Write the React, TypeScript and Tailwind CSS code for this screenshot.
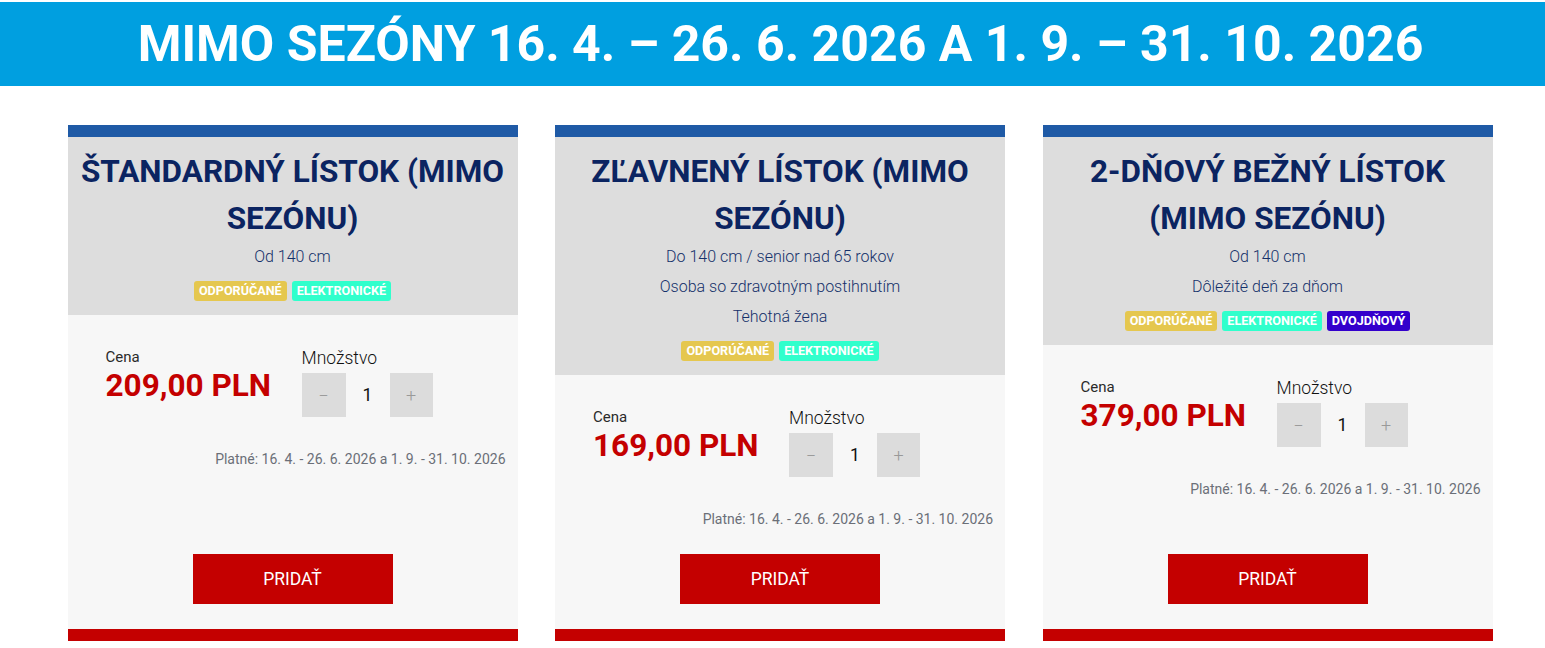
import React from "react";

type Badge = { label: string; cls: string };

const ODP: Badge = { label: "ODPORÚČANÉ", cls: "bg-[#e5c74f]" };
const ELE: Badge = { label: "ELEKTRONICKÉ", cls: "bg-[#30ffcc]" };
const DVO: Badge = { label: "DVOJDŇOVÝ", cls: "bg-[#3300cc]" };

const cards = [
  {
    title: "ŠTANDARDNÝ LÍSTOK (MIMO SEZÓNU)",
    lines: ["Od 140 cm"],
    badges: [ODP, ELE],
    price: "209,00 PLN",
  },
  {
    title: "ZĽAVNENÝ LÍSTOK (MIMO SEZÓNU)",
    lines: ["Do 140 cm / senior nad 65 rokov", "Osoba so zdravotným postihnutím", "Tehotná žena"],
    badges: [ODP, ELE],
    price: "169,00 PLN",
  },
  {
    title: "2-DŇOVÝ BEŽNÝ LÍSTOK (MIMO SEZÓNU)",
    lines: ["Od 140 cm", "Dôležité deň za dňom"],
    badges: [ODP, ELE, DVO],
    price: "379,00 PLN",
  },
];

function Card({ c }: { c: (typeof cards)[number] }) {
  return (
    <div className="flex flex-col w-[450px]">
      <div className="h-[12px] bg-[#1f5aa6]" />
      <div className="bg-[#dddddd] px-3 pt-[11px] pb-[14px] text-center">
        <h2 className="text-[31.5px] leading-[47px] font-bold text-[#0b2461]">{c.title}</h2>
        {c.lines.map((l) => (
          <p key={l} className="text-[16px] leading-[30px] font-light text-[#14306a]">
            {l}
          </p>
        ))}
        <div className="mt-[9px] flex justify-center gap-[5px]">
          {c.badges.map((b) => (
            <span
              key={b.label}
              className={`${b.cls} h-[20px] px-[5px] rounded-[3px] text-white text-[12.6px] leading-[20px] font-bold`}
            >
              {b.label}
            </span>
          ))}
        </div>
      </div>
      <div className="flex-1 bg-[#f7f7f7] flex flex-col px-3 pt-[31px] pb-[25px]">
        <div className="flex pl-[26px]">
          <div className="w-[196px]">
            <div className="text-[15px] leading-[20px] font-normal text-[#2a2a2a] mt-[1px]">Cena</div>
            <div className="text-[31.5px] leading-[38px] font-bold text-[#c40000]">{c.price}</div>
          </div>
          <div>
            <div className="text-[17.5px] leading-[24px] font-light text-[#111]">Množstvo</div>
            <div className="mt-[3px] flex items-center">
              <div className="w-[44px] h-[44px] bg-[#dcdcdc] flex items-center justify-center text-[#999] text-[18px] font-light">
                −
              </div>
              <div className="w-[44px] text-center text-[17.5px] text-[#111]">1</div>
              <div className="w-[43px] h-[44px] bg-[#dcdcdc] flex items-center justify-center text-[#999] text-[18px] font-light">
                +
              </div>
            </div>
          </div>
        </div>
        <p className="mt-[32px] mb-[25px] text-right text-[14px] leading-[20px] text-[#6b6f78]">
          Platné: 16. 4. - 26. 6. 2026 a 1. 9. - 31. 10. 2026
        </p>
        <div className="mt-auto flex justify-center">
          <button className="w-[200px] h-[50px] bg-[#c40000] text-white text-[17.5px] uppercase">
            Pridať
          </button>
        </div>
      </div>
      <div className="h-[12px] bg-[#c40000]" />
    </div>
  );
}

export default function App() {
  return (
    <div className="min-h-[648px] bg-white font-['Roboto',sans-serif] pt-[2px]">
      <div className="h-[84px] bg-[#009fe0] flex items-center justify-center pl-[16px]">
        <h1 className="text-[50px] font-bold text-white leading-none">
          MIMO SEZÓNY 16. 4. – 26. 6. 2026 A 1. 9. – 31. 10. 2026
        </h1>
      </div>
      <div className="mt-[39px] flex justify-center gap-[37.5px] items-stretch pl-[15px]">
        {cards.map((c) => (
          <Card key={c.title} c={c} />
        ))}
      </div>
    </div>
  );
}
